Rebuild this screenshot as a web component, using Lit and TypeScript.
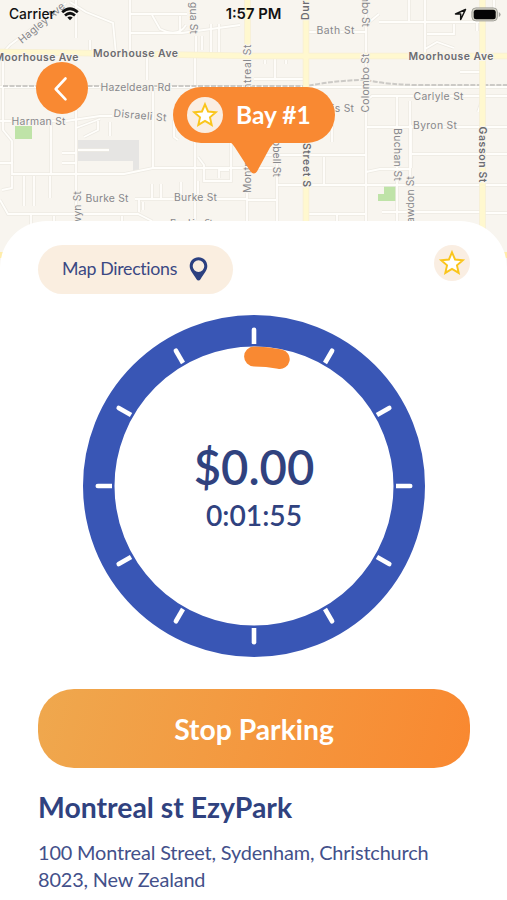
import { LitElement, html, svg, css } from "lit";
import { customElement, property } from "lit/decorators.js";

type Label = [text: string, x: number, y: number, width: number, rotate?: number, bold?: boolean];

// x/y is the centre of each label, width its drawn length.
const LABELS: Label[] = [
  ["Hagley Ave", 41.5, 23, 57, -40],
  ["gua St", 193.5, 18, 32, 90],
  ["Moorhouse Ave", 36.5, 57.5, 84, 0, true],
  ["Moorhouse Ave", 135.5, 53.5, 85, 0, true],
  ["Moorhouse Ave", 451, 56, 85, 0, true],
  ["Hazeldean Rd", 135.5, 87.5, 70],
  ["Harman St", 38.5, 121.5, 54],
  ["Montreal St", 247, 75.5, 62, -90],
  ["Bath St", 335.5, 30.5, 38],
  ["Durham", 305.5, -1.5, 43, -90, true],
  ["Colombo St", 366, -1, 56, 90],
  ["Colombo St", 365.5, 83, 59, -90],
  ["Carlyle St", 438.5, 96.5, 50],
  ["Byron St", 435, 125.5, 44],
  ["Harris St", 331.5, 108.5, 45],
  ["Buchan St", 397.5, 154.5, 53, 90],
  ["Lawdon St", 410.5, 202.5, 53, -90],
  ["Gasson St", 483, 154.5, 56, 90, true],
  ["Durham Street S", 307, 141.500, 91, 90, true],
  ["Campbell St", 277, 147, 60, 90],
  ["Montreal St", 247, 163, 60, -90],
  ["Burke St", 107, 198, 43],
  ["Burke St", 195.5, 197, 43],
  ["Selwyn St", 77, 216, 50, -90],
  ["Brookins St", 191.5, 223.5, 43],
];

const STREETS = [
  "M0 56 L10 45 L66 3",
  "M76 0V38M76 110V262",
  "M70 2 L86 12 L113 23 L116 54",
  "M130 0V53M130 33H182L240 25M130 14H187",
  "M152 15 L160 29 Q178 38 186 25M180 33V16",
  "M196 36V53M202 36V50M211 24V53M219 24V53M90 54V40M147 57V80",
  "M3 58V130 L12 141V163",
  "M0 87H507",
  "M153 90V168",
  "M195 58V86M195 140V221",
  "M0 121H62M66 121L100 116H112M76 128L100 119",
  "M84 137L98 130V121M110 122V136M51 121V175",
  "M0 163H12V174H124L153 168H247",
  "M62 153H77M62 163H77M78 150H109",
  "M24 176V206M34 176V206M2 190L12 188V176",
  "M50 176V198M0 200L8 214H138L152 221M31 214V250M54 216V221M122 216V221",
  "M135 199H247M139 200V212M152 184V199M161 184V199M181 182V198M143 202V210",
  "M198 157L204 165V181H231V143M198 181V200M219 178V170H229",
  "M247 138V221M247 200H276M247 168H278",
  "M275 58V80M254 79H306M265 60V64M286 60V64",
  "M277 150V221M277 185H507",
  "M332 142V125M253 155H366M324 157V184",
  "M366 0V221M307 32H366M367 24L379 14M366 101L372 96H507M397 97V221",
  "M410 101V185M367 127H507M412 154H507M366 172L380 169H411",
  "M411 125V168M382 212H482M306 214H365M337 215V221",
  "M409 0V23M379 22H482M425 0V54M425 49L437 42L454 48",
  "M427 34H454V24M477 22V31M460 72H482M482 100L478 112M480 213H507",
  "M223 137V142M174 120V137L178 140M494 0V20",
];

const ARTERIALS = ["M-2 52 L80 53 L254 56 H509", "M247.500 0V54", "M306 0V221", "M482.500 0V260"];

@customElement("street-map")
export class StreetMap extends LitElement {
  static styles = css`
    :host { display: block; }
    svg { display: block; width: 507px; height: 275px; }
    .casing { fill: none; stroke: #edeae3; stroke-width: 3.4; }
    .road { fill: none; stroke: #fffefb; stroke-width: 1.8; }
    .main-casing { fill: none; stroke: #f7efd2; stroke-width: 6.6; }
    .main { fill: none; stroke: #fff8cf; stroke-width: 5; }
    .rail { fill: none; stroke: #cccac6; stroke-width: 2; stroke-dasharray: 5 1.500; }
    text {
      font-family: Inter, "Liberation Sans", sans-serif;
      font-size: 10.4px;
      fill: #87878b;
      stroke: #f8f5ef;
      stroke-width: 2px;
      paint-order: stroke;
      text-anchor: middle;
    }
    .bold { font-weight: 600; fill: #6c6c70; }
  `;

  render() {
    return html`<svg viewBox="0 0 507 275">
      <rect width="507" height="275" fill="#f8f5ef" />
      <path d="M78 140h61v31h-6v-10H78z" fill="#e6e5e3" />
      <path d="M15 126h17v13H15zM384 186h12v15h-18v-7h6z" fill="#bfe3a8" />
      ${STREETS.map((d) => svg`<path class="casing" d=${d} />`)}
      ${STREETS.map((d) => svg`<path class="road" d=${d} />`)}
      <path class="rail" d="M3 86H306Q338 80 366 80Q390 85 420 85H507" />
      ${ARTERIALS.map((d) => svg`<path class="main-casing" d=${d} />`)}
      ${ARTERIALS.map((d) => svg`<path class="main" d=${d} />`)}
      <path d="M0 255h4M503 255h4" stroke="#ffedab" stroke-width="6" />
      ${LABELS.map(
        ([text, x, y, w, r = 0, b]) => svg`<text class=${b ? "bold" : ""} textLength=${w}
          transform="translate(${x} ${y}) rotate(${r})" y="3.600">${text}</text>`,
      )}
      <text textLength="53" transform="translate(140 116) rotate(5)" y="3">Disraeli St</text>
    </svg>`;
  }
}

@customElement("star-badge")
export class StarBadge extends LitElement {
  static styles = css`
    :host { display: block; width: 36px; height: 36px; border-radius: 50%; background: #faeee2; }
    svg { display: block; }
  `;

  render() {
    return html`<svg width="36" height="36" viewBox="-18 -18.700 36 36">
      <path d="M0-11.400L3.060-4.210L10.840-3.520L4.950 1.610L6.700 9.220L0 5.200L-6.700 9.220L-4.950 1.610L-10.840-3.520L-3.060-4.210z"
        fill="#fff" stroke="#fac51c" stroke-width="1.900" />
    </svg>`;
  }
}

@customElement("parking-dial")
export class ParkingDial extends LitElement {
  @property() cost = "";
  @property() elapsed = "";
  @property({ type: Number }) minutes = 0;

  static styles = css`
    :host { display: grid; width: 342px; height: 342px; }
    svg, .readout { grid-area: 1 / 1; }
    svg { width: 342px; height: 342px; }
    .readout {
      display: flex; flex-direction: column; align-items: center; justify-content: center;
      padding-top: 4px; color: #30427f;
    }
    .cost { font-size: 47.2px; line-height: 54px; font-weight: 600; }
    .time { font-size: 28.2px; line-height: 40px; font-weight: 600; padding-top: 1px; }
  `;

  render() {
    const a = (this.minutes / 60) * Math.PI * 2;
    const x = Math.sin(a) * 129.5;
    const y = -Math.cos(a) * 129.5;
    const ticks = Array.from({ length: 12 }, (_, i) => i * 30);
    return html`
      <svg viewBox="-171 -171 342 342">
        <circle r="155.250" fill="none" stroke="#3956b5" stroke-width="31.500" />
        ${ticks.map(
          (t) => svg`<path transform="rotate(${t})" fill="#fff"
            d="M-2.300 -142V-156.200a2.300 2.300 0 0 1 4.600 0V-142z" />`,
        )}
        <path d="M0 -129.500A129.500 129.500 0 0 1 ${x} ${y}" fill="none"
          stroke="#f98932" stroke-width="19.800" stroke-linecap="round" />
      </svg>
      <div class="readout">
        <div class="cost">${this.cost}</div>
        <div class="time">${this.elapsed}</div>
      </div>
    `;
  }
}

@customElement("app-root")
export class AppRoot extends LitElement {
  static styles = css`
    :host {
      display: block; position: relative; width: 507px; height: 900px;
      overflow: hidden; background: #fff;
      font-family: Lato, "Liberation Sans", sans-serif; color: #30427f;
    }
    .map { position: absolute; top: 0; left: 0; }
    .header { position: relative; height: 221px; }
    .status {
      display: grid; grid-template-columns: 1fr auto 1fr; align-items: center;
      height: 28px; padding: 0 6px; box-sizing: border-box;
      font: 500 13.8px/28px Inter, "Liberation Sans", sans-serif; color: #111;
    }
    .carrier { display: flex; align-items: center; gap: 6px; padding-left: 3px; }
    .clock { font-weight: 600; font-size: 14.8px; }
    .indicators { display: flex; align-items: center; justify-content: flex-end; gap: 4px; }
    .back {
      display: block; width: 52px; height: 52px; margin: 33.5px 0 0 36px; padding: 0;
      border: 0; border-radius: 50%; background: #f98932;
    }
    .back svg { display: block; }
    .pin { position: absolute; left: 173px; top: 86.5px; width: 162px; }
    .bubble {
      display: flex; align-items: center; gap: 13px; height: 56px; box-sizing: border-box;
      padding-left: 14px; border-radius: 28px; background: #f98932;
      color: #fff; font-size: 24.500px; font-weight: 700;
    }
    .tail { display: block; margin: -1px 0 0 56px; }
    .sheet {
      position: relative; height: 679px; box-sizing: border-box; padding: 24px 37px 0 38px;
      background: #fff; border-radius: 47px 47px 0 0;
    }
    .actions { display: flex; justify-content: space-between; align-items: flex-start; }
    .directions {
      display: flex; align-items: center; gap: 12px; width: 195px; height: 49px;
      box-sizing: border-box; padding: 0 0 3px 24px; border: 0; border-radius: 25px;
      background: #faeee0; color: #3a4883; font: 400 17.8px Lato, sans-serif; white-space: nowrap;
      letter-spacing: -0.32px; font-variant-ligatures: none;
    }
    .directions svg { margin-top: 2px; }
    .dial { margin: 20.500px 0 0 45px; }
    .stop {
      display: block; width: 432px; height: 79px; margin: 32.500px 0 0; padding: 0;
      border: 0; border-radius: 36px; color: #fff;
      background: linear-gradient(105deg, #efa84e, #f98830);
      font: 700 28.3px Lato, sans-serif;
    }
    .name { margin: 22px 0 0; font-size: 28.4px; line-height: 34px; font-weight: 700; }
    .address {
      margin: 15px 0 0; font-size: 19.9px; line-height: 27px; color: #43508a;
      letter-spacing: -0.160px;
    }
  `;

  render() {
    return html`
      <street-map class="map"></street-map>
      <div class="header">
        <div class="status">
          <div class="carrier">
            Carrier
            <svg width="18" height="14" viewBox="0 0 18 14" fill="none" stroke="#111" stroke-width="2.700">
              <path d="M1.200 5.300Q9-1.800 16.800 5.300M4 8.500Q9 4 14 8.500" />
              <path d="M9 13.300L6.300 10.500Q9 8.500 11.700 10.500z" fill="#111" stroke="none" />
            </svg>
          </div>
          <div class="clock">1:57 PM</div>
          <div class="indicators">
            <svg width="13" height="13" viewBox="0 0 13 13" fill="none" stroke="#111" stroke-width="1.500">
              <path d="M11.500 1.500L1.500 6H6.700V11.500z" stroke-linejoin="round" />
            </svg>
            <svg width="30" height="15" viewBox="0 0 30 15">
              <rect x=".9" y=".9" width="25.500" height="13" rx="4" fill="#d6d4c8" stroke="#a3a29b" />
              <rect x="2.700" y="2.700" width="22" height="9.500" rx="2.500" fill="#050505" />
              <path d="M27.800 5v5q1.800-1 1.800-2.500T27.800 5z" fill="#a3a29b" />
            </svg>
          </div>
        </div>
        <button class="back" aria-label="Back">
          <svg width="52" height="52" viewBox="0 0 52 52" fill="none" stroke="#fff"
            stroke-width="2.600" stroke-linecap="round" stroke-linejoin="round">
            <path d="M29.500 16.500L19.700 27L29.500 37.300" />
          </svg>
        </button>
        <div class="pin">
          <div class="bubble"><star-badge></star-badge>Bay #1</div>
          <svg class="tail" width="50" height="32" viewBox="0 0 50 32">
            <path d="M1 0H47Q43.500 1.500 41 5.500L28 29.500Q24.800 33.500 21.500 29.500L6 5.500Q3.500 1.500 1 0z" fill="#f98932" />
          </svg>
        </div>
      </div>
      <main class="sheet">
        <div class="actions">
          <button class="directions">
            Map Directions
            <svg width="19" height="24" viewBox="0 0 19 24">
              <path fill="#2b4080" fill-rule="evenodd"
                d="M9.500.3C4.500.3.700 4.100.700 9c0 4.600 3.500 7.500 6.800 13.300.9 1.600 3.100 1.600 4 0C14.800 16.500 18.300 13.600 18.300 9 18.300 4.100 14.500.3 9.500.3zM9.500 3.300a5.800 5.800 0 1 1 0 11.600 5.800 5.800 0 0 1 0-11.600z" />
            </svg>
          </button>
          <star-badge></star-badge>
        </div>
        <parking-dial class="dial" cost="$0.00" elapsed="0:01:55" .minutes=${115 / 60}></parking-dial>
        <button class="stop">Stop Parking</button>
        <h1 class="name">Montreal st EzyPark</h1>
        <p class="address">100 Montreal Street, Sydenham, Christchurch<br />8023, New Zealand</p>
      </main>
    `;
  }
}
